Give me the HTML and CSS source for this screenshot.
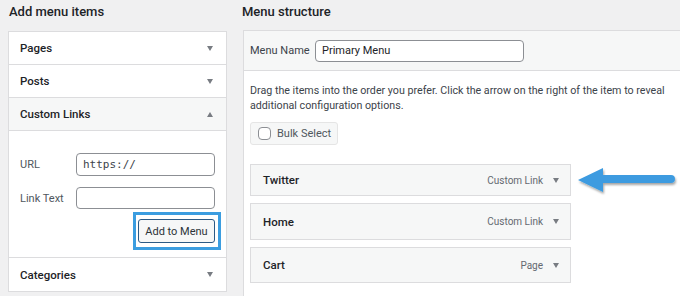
FILE: index.html
```html
<!DOCTYPE html>
<html>
<head>
<meta charset="utf-8">
<link rel="stylesheet" href="styles.css">
</head>
<body>
<div class="page">
  <section class="left">
    <h2 class="title">Add menu items</h2>
    <div class="accordion">
      <div class="acc-row"><span>Pages</span><span class="tri down"></span></div>
      <div class="acc-row"><span>Posts</span><span class="tri down"></span></div>
      <div class="acc-row open"><span>Custom Links</span><span class="tri up"></span></div>
      <div class="acc-body">
        <div class="field">
          <label class="flabel">URL</label>
          <div class="input mono">https://</div>
        </div>
        <div class="field">
          <label class="flabel">Link Text</label>
          <div class="input short"></div>
        </div>
        <div class="btn-wrap">
          <div class="highlight"><button class="btn">Add to Menu</button></div>
        </div>
      </div>
      <div class="acc-row last"><span>Categories</span><span class="tri down"></span></div>
    </div>
  </section>
  <section class="right">
    <h2 class="title title-right">Menu structure</h2>
    <div class="panel">
      <div class="panel-head">
        <span class="name-label">Menu Name</span>
        <div class="input name-input">Primary Menu</div>
      </div>
      <div class="panel-body">
        <p class="desc">Drag the items into the order you prefer. Click the arrow on the right of the item to reveal additional configuration options.</p>
        <div class="bulk"><span class="checkbox"></span><span>Bulk Select</span></div>
        <div class="items">
          <div class="item item-1">
            <span class="item-title">Twitter</span>
            <span class="item-meta">Custom Link</span><span class="tri down"></span>
            <svg class="pointer" width="106" height="34" viewBox="0 0 106 34">
              <defs>
                <filter id="sh" x="-10%" y="-30%" width="130%" height="180%">
                  <feDropShadow dx="1" dy="2" stdDeviation="1.2" flood-color="#000" flood-opacity="0.35"/>
                </filter>
              </defs>
              <g filter="url(#sh)">
                <path d="M2 16 L27 4 L27 11 L95 11 Q99 11 99 15 Q99 19 95 19 L27 19 L27 28 Z" fill="#3d9be0"/>
              </g>
            </svg>
          </div>
          <div class="item item-2">
            <span class="item-title">Home</span>
            <span class="item-meta">Custom Link</span><span class="tri down"></span>
          </div>
          <div class="item item-3">
            <span class="item-title">Cart</span>
            <span class="item-meta">Page</span><span class="tri down"></span>
          </div>
        </div>
      </div>
    </div>
  </section>
</div>
</body>
</html>
```

FILE: styles.css
```css
* { box-sizing: border-box; }
html, body {
  margin: 0;
  padding: 0;
  width: 680px;
  height: 296px;
  overflow: hidden;
  background: #f0f0f1;
  font-family: "Roboto", "Liberation Sans", sans-serif;
  color: #1d2327;
  font-size: 11px;
}
.page {
  display: flex;
  gap: 16px;
  padding-left: 8px;
}
.left { width: 219px; flex: none; }
.right { flex: 1; margin-right: -20px; }
.title {
  margin: 0;
  height: 30px;
  font-size: 13px;
  font-weight: 500;
  line-height: 23px;
  padding-left: 1px;
  white-space: nowrap;
}
.title-right { margin-left: -2px; }
.accordion {
  background: #fff;
  border: 1px solid #dcdcde;
  margin-top: 1px;
}
.acc-row {
  display: flex;
  align-items: center;
  justify-content: space-between;
  height: 33px;
  padding: 0 13px 0 11px;
  font-weight: 500;
  font-size: 11.5px;
  border-bottom: 1px solid #dcdcde;
  white-space: nowrap;
}
.acc-row.open { background: #f6f7f7; }
.acc-row.last { border-bottom: none; height: 34px; border-top: 1px solid #dcdcde; }
.tri {
  flex: none;
  width: 0; height: 0;
  border-left: 3.5px solid transparent;
  border-right: 3.5px solid transparent;
}
.tri.down { border-top: 5px solid #787c82; }
.tri.up { border-bottom: 5px solid #787c82; }
.acc-body {
  padding: 22px 12px 7px 11px;
  display: flex;
  flex-direction: column;
}
.field {
  display: flex;
  align-items: center;
  margin-bottom: 11px;
}
.flabel {
  width: 56px;
  flex: none;
  color: #50575e;
  font-size: 11px;
  white-space: nowrap;
}
.input {
  width: 139px;
  height: 23px;
  flex: none;
  border: 1px solid #8c8f94;
  border-radius: 4px;
  background: #fff;
  padding: 0 6px;
  display: flex;
  align-items: center;
  font-size: 11px;
  color: #2c3338;
  white-space: nowrap;
}
.input.short { height: 22px; }
.mono {
  font-family: "DejaVu Sans Mono", "Liberation Mono", monospace;
  font-size: 11px;
  color: #3c434a;
}
.btn-wrap {
  display: flex;
  justify-content: flex-end;
  margin-top: -8px;
  margin-right: -7px;
}
.highlight {
  border: 3px solid #3b9de0;
  padding: 4px 3px 4px 2px;
  background: #fff;
}
.btn {
  display: block;
  font-family: inherit;
  font-size: 11px;
  color: #2c3338;
  background: #f6f7f7;
  border: 1px solid #2c5a85;
  border-radius: 3px;
  height: 24px;
  width: 77px;
  padding: 0;
  white-space: nowrap;
}
.panel {
  background: #fff;
  border: 1px solid #dcdcde;
  border-right: none;
  height: 280px;
}
.panel-head {
  background: #f6f7f7;
  border-bottom: 1px solid #dcdcde;
  height: 40px;
  display: flex;
  align-items: center;
  padding-left: 6px;
  gap: 4px;
}
.name-label { color: #3c434a; font-size: 11px; width: 61px; flex: none; white-space: nowrap; }
.name-input { width: 209px; height: 22px; padding-left: 6px; font-size: 11px; color: #1d2327; }
.panel-body { padding: 12px 6px 0 6px; }
.desc {
  margin: 0;
  font-size: 10.7px;
  line-height: 15px;
  color: #3c434a;
  width: 432px;
}
.bulk {
  margin-top: 9px;
  width: 88px;
  height: 23px;
  background: #f6f7f7;
  border: 1px solid #e5e5e5;
  border-radius: 3px;
  display: flex;
  align-items: center;
  gap: 6px;
  padding-left: 7px;
  font-size: 11px;
  color: #50575e;
  white-space: nowrap;
}
.checkbox {
  flex: none;
  width: 13px; height: 13px;
  border: 1px solid #8c8f94;
  border-radius: 4px;
  background: #fff;
}
.items {
  margin-top: 19px;
  display: flex;
  flex-direction: column;
  gap: 7px;
}
.item {
  position: relative;
  width: 321px;
  background: #f6f7f7;
  border: 1px solid #dcdcde;
  display: flex;
  align-items: center;
  padding: 0 11px 0 12px;
  gap: 10px;
  white-space: nowrap;
}
.item-1 { height: 32px; }
.item-2 { height: 37px; }
.item-3 { height: 36px; }
.item-title { font-weight: 500; flex: 1; font-size: 11.5px; }
.item-meta { color: #646970; font-size: 10px; }
.pointer {
  position: absolute;
  left: 325px;
  top: -1px;
}
```
